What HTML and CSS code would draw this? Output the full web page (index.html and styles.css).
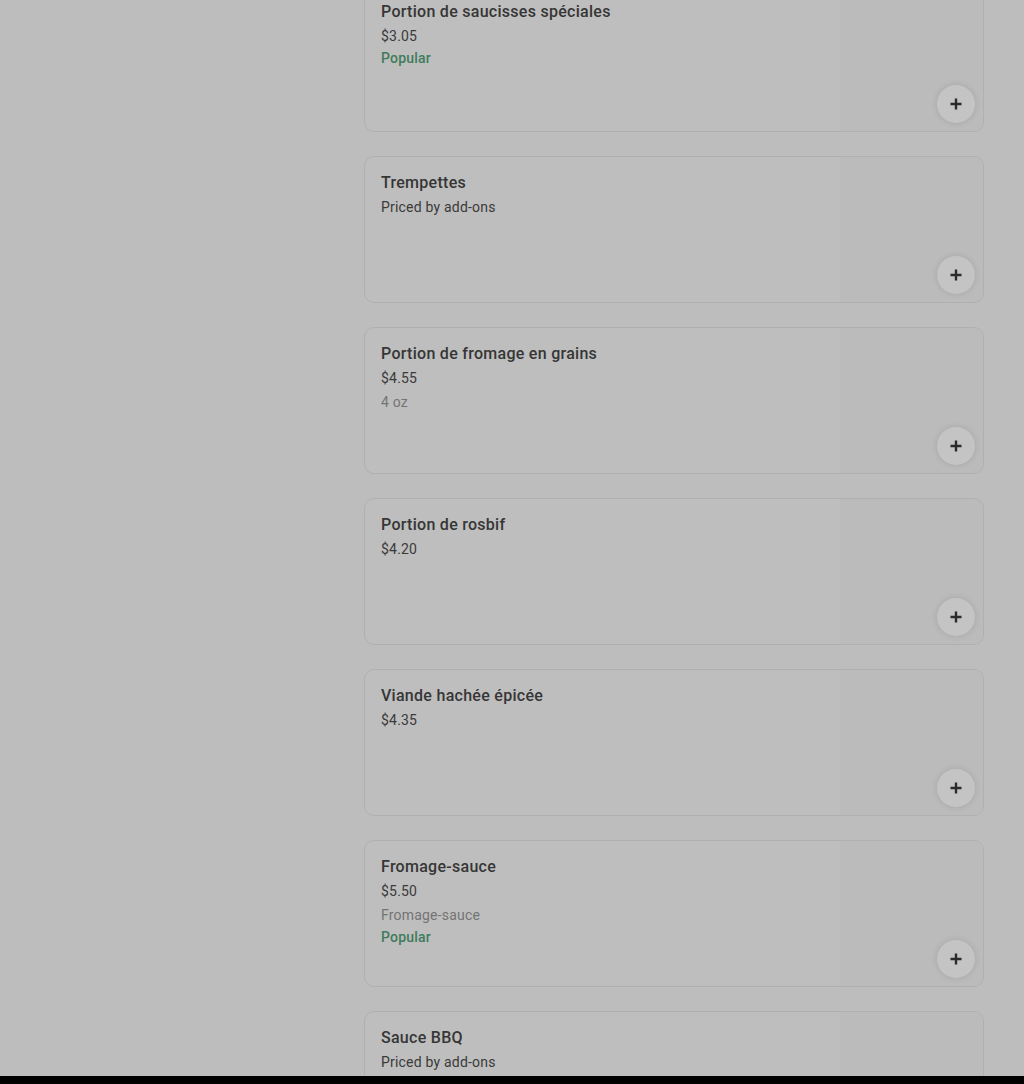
FILE: index.html
```html
<!DOCTYPE html>
<html lang="fr">
<head>
<meta charset="utf-8">
<title>Menu</title>
<link rel="stylesheet" href="styles.css">
</head>
<body>
<div class="viewport">
  <div class="list">
    <div class="card">
      <div class="info">
        <div class="title">Portion de saucisses spéciales</div>
        <div class="price">$3.05</div>
        <div class="popular">Popular</div>
      </div>
      <div class="media"><button class="add" aria-label="Ajouter"><svg viewBox="0 0 12 12" width="12" height="12"><path d="M6 0.5v11M0.5 6h11" stroke="#2b2b2b" stroke-width="2.4"/></svg></button></div>
    </div>
    <div class="card">
      <div class="info">
        <div class="title">Trempettes</div>
        <div class="price">Priced by add-ons</div>
      </div>
      <div class="media"><button class="add" aria-label="Ajouter"><svg viewBox="0 0 12 12" width="12" height="12"><path d="M6 0.5v11M0.5 6h11" stroke="#2b2b2b" stroke-width="2.4"/></svg></button></div>
    </div>
    <div class="card">
      <div class="info">
        <div class="title">Portion de fromage en grains</div>
        <div class="price">$4.55</div>
        <div class="desc">4 oz</div>
      </div>
      <div class="media"><button class="add" aria-label="Ajouter"><svg viewBox="0 0 12 12" width="12" height="12"><path d="M6 0.5v11M0.5 6h11" stroke="#2b2b2b" stroke-width="2.4"/></svg></button></div>
    </div>
    <div class="card">
      <div class="info">
        <div class="title">Portion de rosbif</div>
        <div class="price">$4.20</div>
      </div>
      <div class="media"><button class="add" aria-label="Ajouter"><svg viewBox="0 0 12 12" width="12" height="12"><path d="M6 0.5v11M0.5 6h11" stroke="#2b2b2b" stroke-width="2.4"/></svg></button></div>
    </div>
    <div class="card">
      <div class="info">
        <div class="title">Viande hachée épicée</div>
        <div class="price">$4.35</div>
      </div>
      <div class="media"><button class="add" aria-label="Ajouter"><svg viewBox="0 0 12 12" width="12" height="12"><path d="M6 0.5v11M0.5 6h11" stroke="#2b2b2b" stroke-width="2.4"/></svg></button></div>
    </div>
    <div class="card">
      <div class="info">
        <div class="title">Fromage-sauce</div>
        <div class="price">$5.50</div>
        <div class="desc">Fromage-sauce</div>
        <div class="popular">Popular</div>
      </div>
      <div class="media"><button class="add" aria-label="Ajouter"><svg viewBox="0 0 12 12" width="12" height="12"><path d="M6 0.5v11M0.5 6h11" stroke="#2b2b2b" stroke-width="2.4"/></svg></button></div>
    </div>
    <div class="card">
      <div class="info">
        <div class="title">Sauce BBQ</div>
        <div class="price">Priced by add-ons</div>
      </div>
      <div class="media"><button class="add" aria-label="Ajouter"><svg viewBox="0 0 12 12" width="12" height="12"><path d="M6 0.5v11M0.5 6h11" stroke="#2b2b2b" stroke-width="2.4"/></svg></button></div>
    </div>
  </div>
</div>
</body>
</html>
```

FILE: styles.css
```css
html, body {
  margin: 0;
  padding: 0;
  background: #000;
}
body {
  font-family: Roboto, "Liberation Sans", sans-serif;
}
.viewport {
  height: 1076px;
  overflow: hidden;
  background: #bdbdbd;
}
.list {
  margin-top: -15px;
  margin-left: 364px;
  width: 620px;
  display: flex;
  flex-direction: column;
  gap: 24px;
}
.card {
  box-sizing: border-box;
  height: 147px;
  border: 1px solid #b0b0b0;
  border-radius: 10px;
  background: #bebebe;
  display: flex;
  overflow: hidden;
}
.info {
  flex: 1;
  padding: 16px;
  display: flex;
  flex-direction: column;
}
.title {
  font-size: 16px;
  font-weight: 500;
  line-height: 20px;
  letter-spacing: 0.28px;
  color: #363636;
}
.price {
  margin-top: 4px;
  font-size: 14px;
  line-height: 20px;
  letter-spacing: 0.2px;
  color: #3a3a3a;
}
.desc {
  margin-top: 4px;
  font-size: 14px;
  line-height: 20px;
  letter-spacing: 0.2px;
  color: #747474;
}
.popular {
  margin-top: 2px;
  font-size: 14px;
  font-weight: 500;
  line-height: 20px;
  letter-spacing: 0.2px;
  color: #3e7c5c;
}
.media {
  width: 143px;
  position: relative;
  background: #bbbbbb;
}
.add {
  position: absolute;
  right: 8px;
  bottom: 8px;
  width: 38px;
  height: 38px;
  border: none;
  border-radius: 50%;
  background: #c4c4c4;
  box-shadow: 0 0 6px rgba(0, 0, 0, 0.12);
  display: flex;
  align-items: center;
  justify-content: center;
  padding: 0;
}
```
